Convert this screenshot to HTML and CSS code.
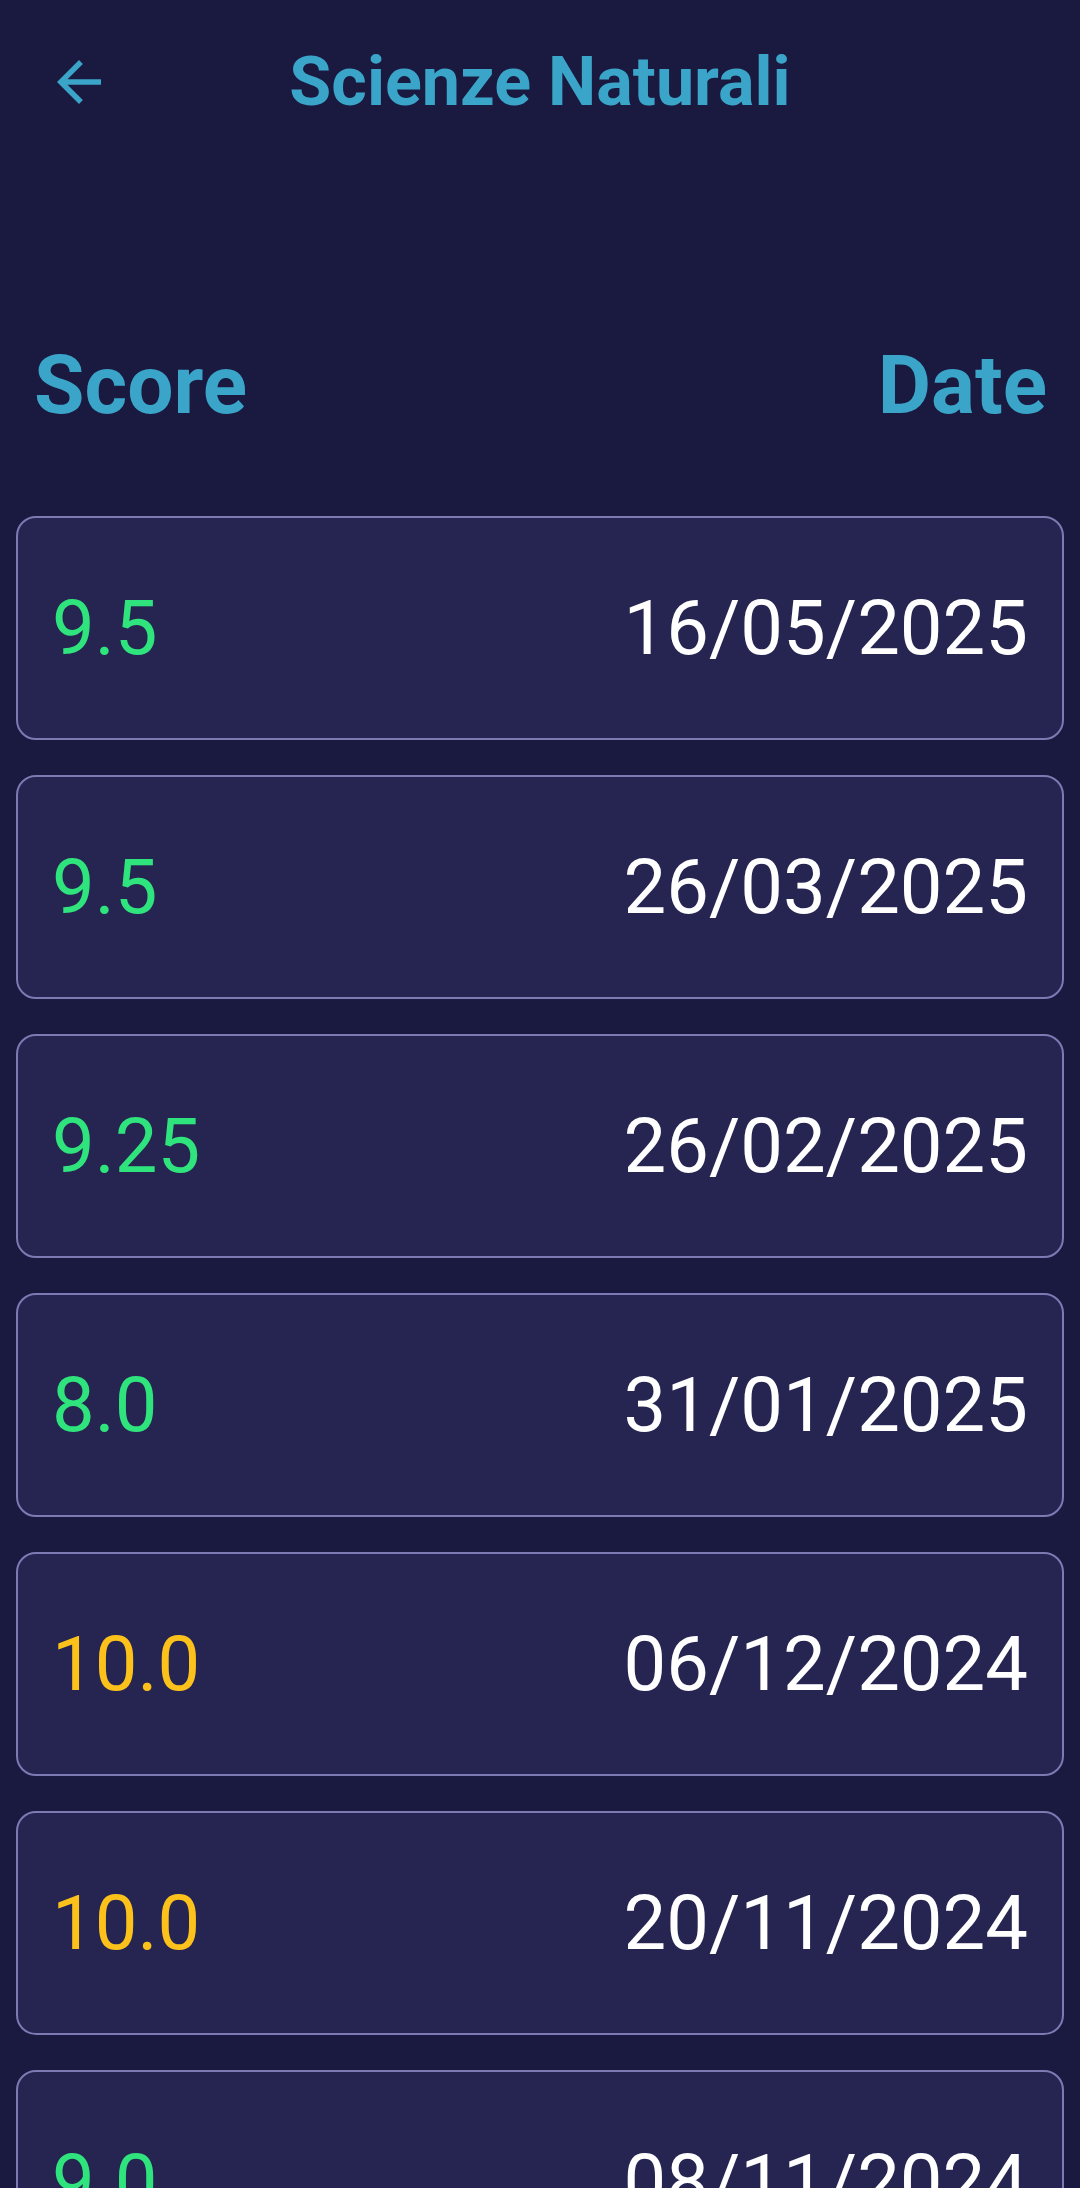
FILE: index.html
```html
<!DOCTYPE html>
<html lang="it">
<head>
<meta charset="utf-8">
<title>Scienze Naturali</title>
<link rel="stylesheet" href="styles.css">
</head>
<body>
<div class="app">
  <header class="topbar">
    <button class="back" aria-label="Indietro">
      <svg viewBox="0 0 24 24" width="66" height="66"><path d="M20 11H7.83l5.59-5.59L12 4l-8 8 8 8 1.41-1.41L7.83 13H20v-2z" fill="currentColor"/></svg>
    </button>
    <h1 class="title">Scienze Naturali</h1>
    <span class="spacer"></span>
  </header>

  <div class="columns">
    <span>Score</span>
    <span>Date</span>
  </div>

  <ul class="list">
    <li class="card"><span class="score good">9.5</span><span class="date">16/05/2025</span></li>
    <li class="card"><span class="score good">9.5</span><span class="date">26/03/2025</span></li>
    <li class="card"><span class="score good">9.25</span><span class="date">26/02/2025</span></li>
    <li class="card"><span class="score good">8.0</span><span class="date">31/01/2025</span></li>
    <li class="card"><span class="score top">10.0</span><span class="date">06/12/2024</span></li>
    <li class="card"><span class="score top">10.0</span><span class="date">20/11/2024</span></li>
    <li class="card"><span class="score good">9.0</span><span class="date">08/11/2024</span></li>
  </ul>
</div>
</body>
</html>
```

FILE: styles.css
```css
* { box-sizing: border-box; }
html, body { margin: 0; padding: 0; }
body {
  background: #1a1940;
  font-family: Roboto, "Noto Sans", "Liberation Sans", sans-serif;
  color: #ffffff;
}
.app {
  width: 1080px;
  height: 2188px;
  overflow: hidden;
  background: #1a1940;
}
.topbar {
  height: 164px;
  display: grid;
  grid-template-columns: 1fr auto 1fr;
  align-items: center;
}
.back {
  justify-self: start;
  margin-left: 46px;
  width: 66px;
  height: 66px;
  padding: 0;
  border: 0;
  background: none;
  color: #3ba4c9;
  display: flex;
}
.back svg { display: block; }
.title {
  margin: 0;
  font-size: 68.25px;
  line-height: 80px;
  font-weight: 700;
  color: #3ba4c9;
  letter-spacing: 0;
}
.columns {
  margin-top: 175px;
  padding: 0 33px 0 34px;
  display: flex;
  justify-content: space-between;
  font-size: 82px;
  line-height: 92px;
  font-weight: 700;
  color: #3ba4c9;
}
.list {
  list-style: none;
  margin: 85px 0 0;
  padding: 0 16px;
  display: flex;
  flex-direction: column;
  gap: 35px;
}
.card {
  height: 224px;
  flex: none;
  border: 2px solid #7d79b2;
  border-radius: 20px;
  background: #262551;
  padding: 0 34px;
  display: flex;
  align-items: center;
  justify-content: space-between;
  font-size: 76px;
  line-height: 86px;
}
.score.good { color: #2fe47d; }
.score.top { color: #fcc21b; }
.date { color: #ffffff; }
```
